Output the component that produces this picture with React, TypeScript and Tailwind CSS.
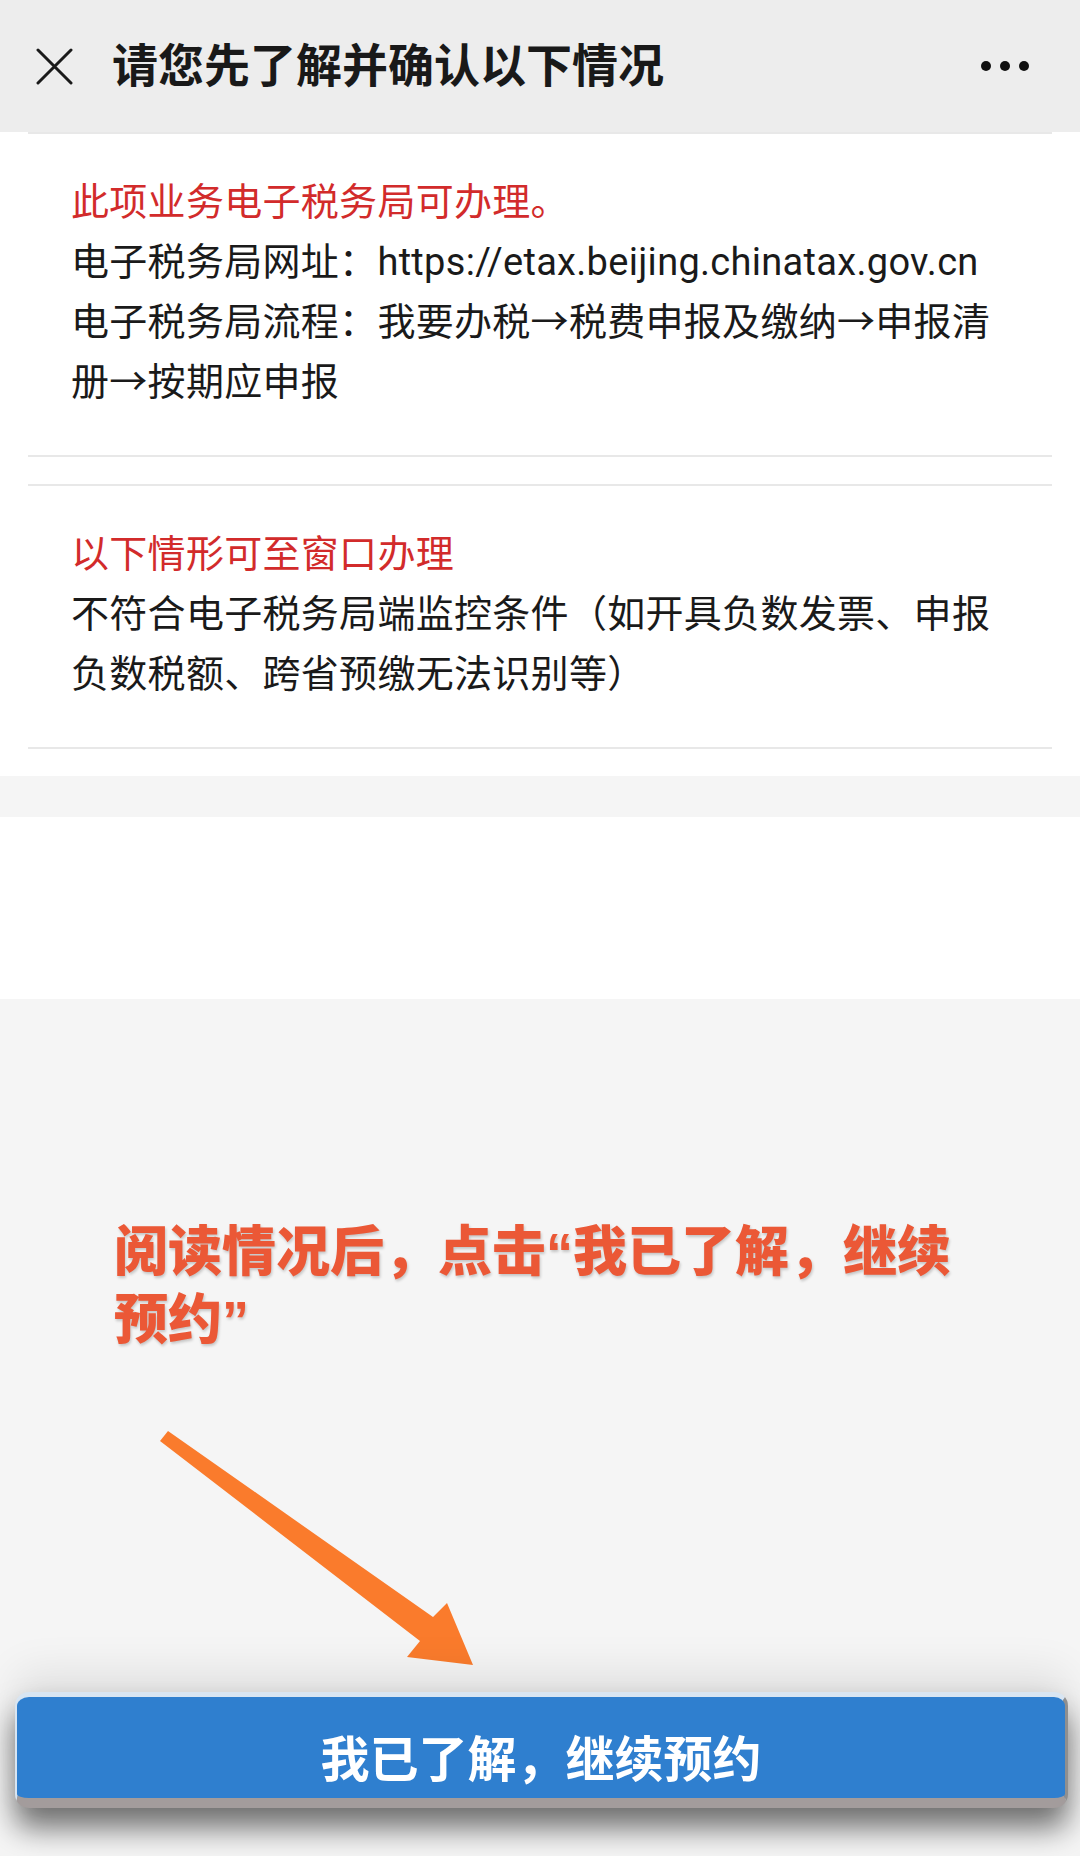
import React from "react";

const body = "font-['Roboto','Noto_Sans_CJK_SC',sans-serif]";

const Header = () => (
  <header className="h-[132px] bg-[#ededed] flex items-center pl-[36px] pr-[51px]">
    <svg width="37" height="37" viewBox="0 0 37 37" className="shrink-0">
      <path d="M2 2 L35 35 M35 2 L2 35" stroke="#1a1a1a" strokeWidth="3" strokeLinecap="round" />
    </svg>
    <h1 className={`ml-[39px] text-[46px] leading-none font-bold text-[#191919] ${body}`}>
      请您先了解并确认以下情况
    </h1>
    <div className="ml-auto flex items-center gap-[9px]">
      <span className="w-[10px] h-[10px] rounded-full bg-[#111]" />
      <span className="w-[10px] h-[10px] rounded-full bg-[#111]" />
      <span className="w-[10px] h-[10px] rounded-full bg-[#111]" />
    </div>
  </header>
);

const Divider = () => <div className="mx-[28px] h-[2px] bg-[#e8e8e8]" />;

const Notice = ({ title, lines }: { title: string; lines: string[] }) => (
  <div className={`pt-[38px] pb-[43px] pl-[71px] ${body} text-[38px] tracking-[0.3px] leading-[60px] whitespace-nowrap`}>
    <p className="text-[#d22b2b]">{title}</p>
    {lines.map((l) => (
      <p key={l} className="text-[#1a1a1a]">
        {l}
      </p>
    ))}
  </div>
);

const App = () => {
  return (
    <div className="w-[1080px] h-[1856px] bg-white overflow-hidden flex flex-col">
      <Header />

      <main className="bg-white">
        <Divider />
        <Notice
          title="此项业务电子税务局可办理。"
          lines={[
            "电子税务局网址：https://etax.beijing.chinatax.gov.cn",
            "电子税务局流程：我要办税→税费申报及缴纳→申报清",
            "册→按期应申报",
          ]}
        />
        <Divider />
        <div className="h-[27px]" />
        <Divider />
        <Notice
          title="以下情形可至窗口办理"
          lines={["不符合电子税务局端监控条件（如开具负数发票、申报", "负数税额、跨省预缴无法识别等）"]}
        />
        <Divider />
        <div className="h-[27px]" />
      </main>

      <div className="h-[41px] bg-[#f5f5f5]" />
      <div className="h-[182px] bg-white" />

      <section className="flex-1 bg-[#f5f5f5] flex flex-col">
        <div className="pt-[219px] pl-[114px] font-['Liberation_Sans','Noto_Sans_CJK_SC',sans-serif] text-[54px] leading-[68px] font-extrabold text-[#eb5836] whitespace-nowrap [text-shadow:1px_2px_3px_rgba(0,0,0,0.2)]">
          <p>阅读情况后，点击“我已了解，继续</p>
          <p>预约”</p>
        </div>

        <svg width="1080" height="338" viewBox="0 0 1080 338" className="block">
          <polygon
            points="168,77 433,263 447,249 473,311 407,303 420,287 160,87"
            fill="#fa7b2c"
          />
        </svg>

        <button className="ml-[15px] mr-[12px] h-[116px] rounded-[14px] bg-[#2f7fcf] border-t-[5px] border-l-[2px] border-r-[3px] border-b-[10px] border-t-[#d8e5f2] border-l-[#d8e5f2] border-r-[#8f8f8f] border-b-[#a39c9c] shadow-[0_20px_30px_rgba(0,0,0,0.55),0_-22px_40px_rgba(0,0,0,0.08)] flex items-center justify-center pt-[26px]">
          <span className={`text-[49px] leading-none font-bold text-white ${body}`}>我已了解，继续预约</span>
        </button>
      </section>
    </div>
  );
};

export default App;
